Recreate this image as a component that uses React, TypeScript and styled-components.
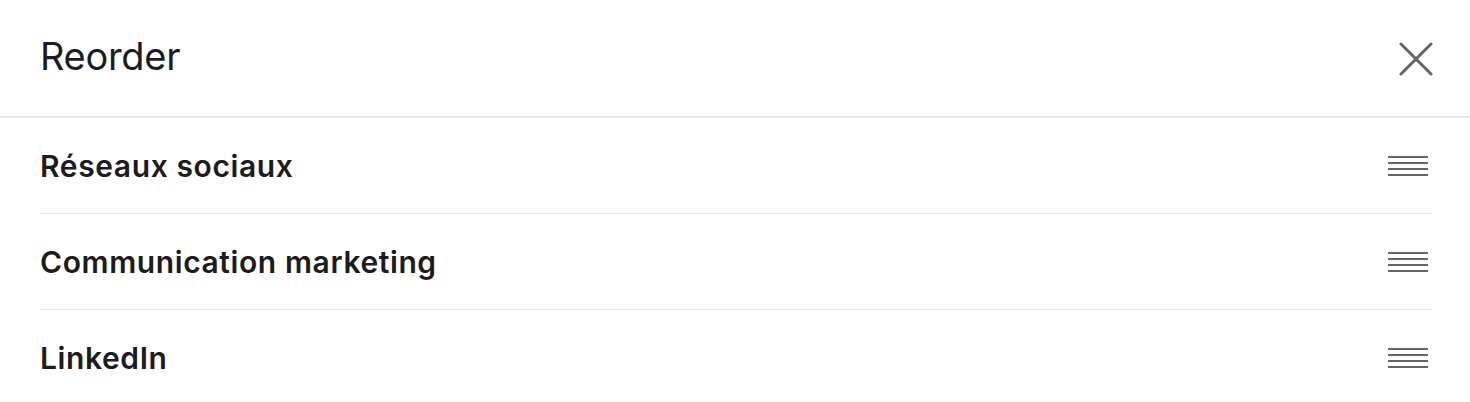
import React from "react";
import styled, { createGlobalStyle } from "styled-components";

const GlobalStyle = createGlobalStyle`
  body {
    margin: 0;
    background: #fff;
    font-family: "Inter", "Liberation Sans", sans-serif;
    color: #1c1c1c;
  }
`;

const items = ["Réseaux sociaux", "Communication marketing", "LinkedIn"];

const App = () => {
  return (
    <>
      <GlobalStyle />
      <Panel>
        <Header>
          <Title>Reorder</Title>
          <CloseButton aria-label="Close">
            <svg width="34" height="34" viewBox="0 0 34 34">
              <path d="M2 2 L32 32 M32 2 L2 32" stroke="#666" strokeWidth="3" strokeLinecap="round" />
            </svg>
          </CloseButton>
        </Header>
        <List>
          {items.map(item => (
            <Row key={item}>
              <Label>{item}</Label>
              <Handle>
                <span />
                <span />
                <span />
                <span />
              </Handle>
            </Row>
          ))}
        </List>
      </Panel>
    </>
  );
};

export default App;

const Panel = styled.div`
  width: 1470px;
  height: 402px;
  overflow: hidden;
  background: #fff;
`;

const Header = styled.div`
  height: 118px;
  box-sizing: border-box;
  padding: 0 37px 4px 40px;
  display: flex;
  align-items: center;
  justify-content: space-between;
  border-bottom: 2px solid #e8e8e8;
`;

const Title = styled.h1`
  margin: 0;
  font-size: 38px;
  font-weight: 400;
  letter-spacing: -0.3px;
  color: #1c1c1c;
`;

const CloseButton = styled.button`
  border: 0;
  background: none;
  padding: 0;
  width: 34px;
  height: 34px;
  margin-top: 6px;
  cursor: pointer;
  svg {
    display: block;
  }
`;

const List = styled.div`
  padding: 0 38px 0 40px;
`;

const Row = styled.div`
  height: 96px;
  box-sizing: border-box;
  display: flex;
  align-items: center;
  justify-content: space-between;
  border-bottom: 1px solid #e6e6e6;
  padding-right: 4px;
`;

const Label = styled.div`
  font-size: 30px;
  font-weight: 600;
  letter-spacing: 0.6px;
  color: #1c1c1c;
`;

const Handle = styled.div`
  width: 40px;
  display: flex;
  flex-direction: column;
  gap: 4px;
  span {
    display: block;
    height: 2px;
    background: #666;
  }
`;
